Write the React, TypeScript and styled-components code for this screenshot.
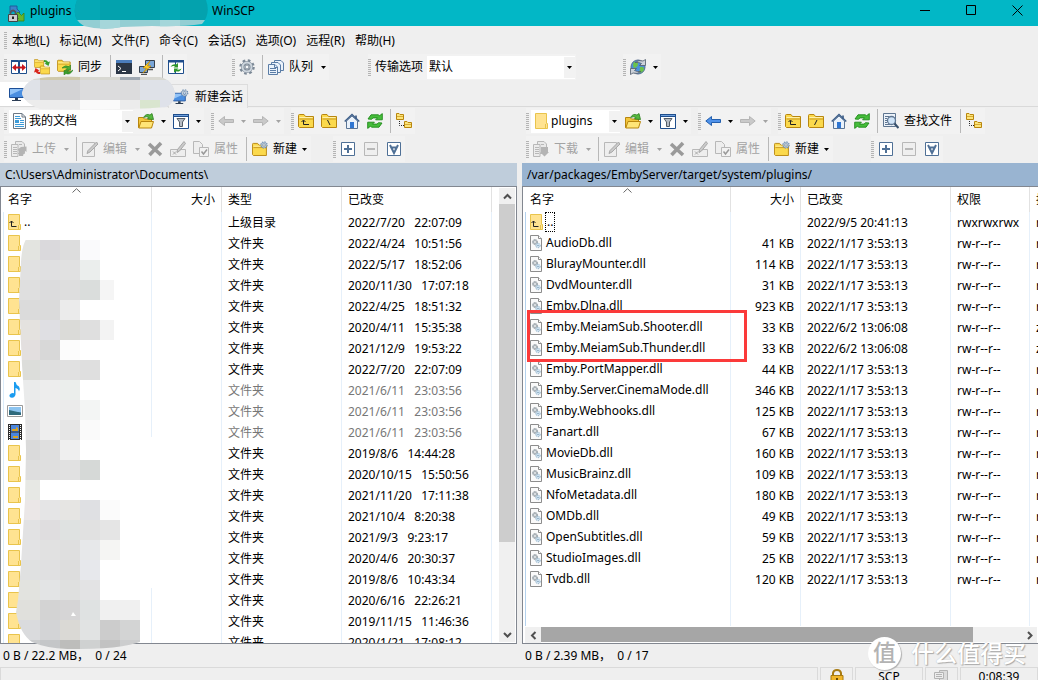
import React from "react";
import styled, { createGlobalStyle } from "styled-components";

const GlobalStyle = createGlobalStyle`
  * { box-sizing: border-box; }
  body {
    margin: 0;
    overflow: hidden;
    background: #efefef;
    color: #000;
    font: 12px/20px "Noto Sans", "Noto Sans CJK SC", sans-serif;
  }
  button, select { font: inherit; color: inherit; }
`;

/* ---------- window frame ---------- */

const Window = styled.div`
  position: relative;
  display: flex;
  flex-direction: column;
  height: 100vh;
  overflow: hidden;
`;

const TitleBar = styled.header`
  display: flex;
  align-items: center;
  height: 26px;
  padding-left: 8px;
  background: #02b7c6;
  flex: none;
`;

const Title = styled.h1`
  display: flex;
  flex: 1;
  margin: 0;
  padding: 0 0 4px 5px;
  font-size: 12px;
  font-weight: 400;
  line-height: 22px;
`;

const TitleName = styled.span`
  width: 182px;
`;

const CaptionButton = styled.button`
  display: flex;
  justify-content: center;
  width: 46px;
  height: 26px;
  padding: 5px 0 0 4px;
  border: 0;
  background: none;
  flex: none;
`;

const MenuBar = styled.nav`
  display: flex;
  align-items: center;
  gap: 5px;
  height: 28px;
  padding-left: 4px;
  flex: none;
`;

const MenuList = styled.div`
  display: flex;
  gap: 10px;
  padding-top: 1px;
`;

const MenuItem = styled.button`
  padding: 0;
  border: 0;
  background: none;
  white-space: nowrap;
`;

/* ---------- toolbars ---------- */

const ToolRow = styled.div<{ $main?: boolean }>`
  display: flex;
  align-items: center;
  height: 28px;
  padding-left: 4px;
  padding-bottom: ${(p) => (p.$main ? 2 : 0)}px;
  overflow: hidden;
  flex: none;
`;

const Strip = styled.div<{ $before?: number }>`
  display: flex;
  align-items: center;
  height: 26px;
  margin-left: ${(p) => p.$before ?? 0}px;
  background: #f2f2f2;
  flex: none;
`;

const Grip = styled.span`
  width: 3px;
  height: 17px;
  background: repeating-linear-gradient(#b4b4b4 0 1px, #efefef 1px 2px);
  flex: none;
`;

const Rule = styled.span`
  width: 1px;
  height: 24px;
  margin: 0 1px 0 4px;
  background: #b8b8b8;
  flex: none;
`;

const ToolButton = styled.button`
  display: flex;
  align-items: center;
  gap: 5px;
  height: 24px;
  padding: 0 3px 0 4px;
  border: 0;
  background: none;
  white-space: nowrap;
  flex: none;
  &:disabled { color: #a3a3a3; }
`;

const TextToolButton = styled(ToolButton)`
  padding-right: 4px;
`;

const DropButton = styled.button`
  display: flex;
  align-items: center;
  justify-content: center;
  width: 12px;
  height: 24px;
  padding: 0;
  border: 0;
  background: none;
  color: #000;
  flex: none;
  &:disabled { color: #a3a3a3; }
`;

const Combo = styled.div<{ $width: number }>`
  position: relative;
  display: flex;
  align-items: center;
  width: ${(p) => p.$width}px;
  height: 23px;
  margin: 0 1px 0 2px;
  border: 1px solid #fff;
  border-right: 0;
  background: #fff;
  flex: none;
`;

const ComboIcon = styled.span`
  display: flex;
  width: 18px;
  padding-left: 3px;
  flex: none;
`;

const ComboSelect = styled.select`
  flex: 1;
  min-width: 0;
  height: 21px;
  padding: 0 0 0 1px;
  border: 0;
  background: none;
  appearance: none;
`;

const ComboArrow = styled.span`
  display: flex;
  align-items: center;
  justify-content: center;
  width: 11px;
  height: 21px;
  background: #f2f2f2;
  flex: none;
`;

const FieldLabel = styled.label`
  padding: 0 2px 0 4px;
`;

/* ---------- session tabs ---------- */

const Tabs = styled.div`
  display: flex;
  height: 25px;
  border-bottom: 1px solid #d9d9d9;
  flex: none;
`;

const Tab = styled.button<{ $active?: boolean }>`
  display: flex;
  align-items: center;
  gap: 6px;
  height: 24px;
  margin-top: ${(p) => (p.$active ? 0 : 2)}px;
  min-width: ${(p) => (p.$active ? 168 : 0)}px;
  padding: 0 4px 0 ${(p) => (p.$active ? 8 : 4)}px;
  border: 1px solid ${(p) => (p.$active ? "#fff" : "#dcdcdc")};
  border-bottom: 0;
  background: ${(p) => (p.$active ? "#fff" : "#f0f0f0")};
`;

/* ---------- panes ---------- */

const Panes = styled.main`
  display: grid;
  grid-template-columns: minmax(0, 517fr) minmax(0, 516fr);
  gap: 5px;
  flex: 1;
  min-height: 0;
`;

const Pane = styled.section`
  display: flex;
  flex-direction: column;
  min-width: 0;
  min-height: 0;
`;

const PathBar = styled.div<{ $focused?: boolean }>`
  height: 23px;
  padding-left: 5px;
  background: ${(p) => (p.$focused ? "#99b4d1" : "#bfcddb")};
  line-height: 23px;
  white-space: nowrap;
  flex: none;
`;

const ListBox = styled.div<{ $column?: boolean }>`
  display: flex;
  flex-direction: ${(p) => (p.$column ? "column" : "row")};
  flex: 1;
  min-height: 0;
  border: 1px solid #828790;
  border-right-width: ${(p) => (p.$column ? 0 : 1)}px;
  background: #fff;
`;

const ListView = styled.div`
  flex: 1;
  min-width: 0;
  min-height: 0;
  overflow: hidden;
`;

const FileTable = styled.table<{ $edge: string }>`
  width: 100%;
  height: 100%;
  table-layout: fixed;
  border-spacing: 0;
  & th, & td {
    height: 21px;
    padding: 0 6px;
    overflow: hidden;
    border-right: 1px solid #e6f0fa;
    line-height: 20px;
    font-weight: 400;
    text-align: left;
    white-space: pre;
  }
  & th {
    position: relative;
    height: 25px;
    border-right-color: #e2e2e2;
  }
  & th:first-child, & td:first-child { padding: 0 0 0 7px; }
  & td:first-child {
    background: linear-gradient(${(p) => p.$edge}, ${(p) => p.$edge}) 2px 0 / 1px 100% no-repeat;
    vertical-align: top;
  }
  & th:last-child, & td:last-child { border-right: 0; padding-right: 0; }
  & tr > :nth-child(2) { text-align: right; }
`;

const Filler = styled.tr`
  && td { height: auto; padding: 0; }
`;

const Row = styled.tr<{ $dim?: boolean }>`
  color: ${(p) => (p.$dim ? "#777" : "#000")};
`;

const NameCell = styled.div`
  display: flex;
  align-items: center;
  gap: 3px;
  height: 20px;
`;

const RowIcon = styled.span`
  display: flex;
  justify-content: center;
  width: 13px;
  flex: none;
  & svg { flex: none; }
`;

const Focused = styled.span`
  min-width: 10px;
  height: 20px;
  margin-left: -1px;
  padding-left: 1px;
  border: 1px dotted #000;
  line-height: 18px;
`;

const SortMark = styled.svg`
  position: absolute;
  top: 1px;
  left: calc(50% - 4px);
`;

const Summary = styled.div`
  height: 23px;
  padding-left: 3px;
  line-height: 24px;
  white-space: pre;
  flex: none;
`;

const VScroll = styled.div`
  display: flex;
  flex-direction: column;
  width: 16px;
  margin: 1px 1px 1px 0;
  background: #f0f0f0;
  flex: none;
`;

const HScroll = styled.div`
  display: flex;
  height: 15px;
  margin: 1px 1px 1px 2px;
  background: #f0f0f0;
  flex: none;
`;

const ScrollButton = styled.button`
  display: flex;
  align-items: center;
  justify-content: center;
  width: 16px;
  height: 16px;
  padding: 0;
  border: 0;
  background: #f0f0f0;
  flex: none;
`;

const Track = styled.div<{ $row?: boolean }>`
  display: flex;
  flex-direction: ${(p) => (p.$row ? "row" : "column")};
  flex: 1;
`;

const Thumb = styled.div<{ $share: number; $dark?: boolean }>`
  flex: 0 0 ${(p) => p.$share}%;
  background: ${(p) => (p.$dark ? "#a6a6a6" : "#cdcdcd")};
`;

/* ---------- bottom bar ---------- */

const StatusBar = styled.footer`
  display: flex;
  gap: 2px;
  height: 13px;
  overflow: hidden;
  flex: none;
`;

const StatusCell = styled.div<{ $width?: number }>`
  display: flex;
  align-items: flex-start;
  justify-content: center;
  flex: ${(p) => (p.$width ? `0 0 ${p.$width}px` : "1")};
  height: 24px;
  border: 1px solid #dadada;
  line-height: 18px;
`;

/* ---------- overlays ---------- */

const Overlay = styled.svg<{ $x: number; $y: number }>`
  position: absolute;
  left: ${(p) => p.$x}px;
  top: ${(p) => p.$y}px;
  pointer-events: none;
`;

const RedBox = styled.div`
  position: absolute;
  left: 5px;
  top: 203px;
  width: 220px;
  height: 52px;
  border: 3px solid #fb3a3a;
  pointer-events: none;
`;

const RightPane = styled(Pane)`
  position: relative;
`;

const Watermark = styled.div`
  position: absolute;
  right: 12px;
  bottom: 10px;
  display: flex;
  align-items: center;
  gap: 10px;
  color: #fff;
  font-size: 23px;
  font-weight: 500;
  line-height: 34px;
  text-shadow: 1px 1px 1px #a9a9a9, 0 0 1px #b5b5b5;
`;

const WatermarkBadge = styled.span`
  width: 33px;
  height: 33px;
  border-radius: 50%;
  background: #fff;
  color: #b3b3b3;
  line-height: 31px;
  text-align: center;
  text-shadow: none;
  box-shadow: 1px 1px 1px #b0b0b0;
`;

/* ---------- icons ---------- */

const Svg = ({ w = 16, h = 16, children }: { w?: number; h?: number; children: React.ReactNode }) => (
  <svg width={w} height={h} viewBox={`0 0 ${w} ${h}`} fill="none" aria-hidden="true">
    {children}
  </svg>
);

const Caret = () => (
  <Svg w={5} h={3}><path d="M0 0H5L2.5 3Z" fill="currentColor" /></Svg>
);

const FolderShape = ({ x = 0, y = 0, s = 1 }: { x?: number; y?: number; s?: number }) => (
  <g transform={`translate(${x} ${y}) scale(${s})`}>
    <path d="M.5 13.5V2.5Q.5 1.5 1.5 1.5H6L7.5 3.5H15.5V14.5H1.5Z" fill="#fbd94c" stroke="#b8860f" />
    <path d="M1.5 6H15" stroke="#c99a22" />
    <path d="M1.5 4.5H14.5" stroke="#fff0a8" />
  </g>
);

const AppIcon = () => (
  <Svg w={17} h={17}>
    <path d="M2 1H9V4L12 7L9 10L6 6L2 8Z" fill="#3b82c9" stroke="#1d5c9c" />
    <path d="M16 8V16H8L10.500 13.500L7 10L10 7L13.500 10.500Z" fill="#67b52e" stroke="#3c8412" strokeWidth=".8" />
    <path d="M2.500 10V7Q5 3.500 7.500 7V10" stroke="#555" strokeWidth="1.600" />
    <path d="M.5 9.500H9.500V16.500H.5Z" fill="#c9ccd0" stroke="#444" />
    <path d="M5 11.500V14" stroke="#222" strokeWidth="2" />
  </Svg>
);

const ColumnsIcon = () => (
  <Svg>
    <path d="M.5 1.500H7.500V14.500H.5ZM8.500 1.500H15.500V14.500H8.500Z" fill="#fff" stroke="#1f4e8c" />
    <path d="M0 1H7.500V3H0ZM8.500 1H16V3H8.500Z" fill="#1f4e8c" />
    <path d="M3 8.500H13" stroke="#c8161d" strokeWidth="2" />
    <path d="M1 8.500L5 5V12ZM15 8.500L11 5V12Z" fill="#c8161d" />
  </Svg>
);

const SyncBrowseIcon = () => (
  <Svg>
    <FolderShape x={0} y={-0.500} s={0.620} />
    <FolderShape x={6} y={6} s={0.620} />
    <path d="M10 1Q13.500 1 14 3L16 2.500L14.500 7L10.500 4.500L12 4Q12 3 10 3Z" fill="#3a9e2d" />
    <path d="M6 15Q2.500 15 2 13L0 13.500L1.500 9L5.500 11.500L4 12Q4 13 6 13Z" fill="#d9261c" />
  </Svg>
);

const SyncIcon = () => (
  <Svg>
    <FolderShape x={0} y={0} s={0.850} />
    <path d="M5 9Q8 5.500 12 7.500L13.500 6V11H8.500L10.500 9.200Q8 8.500 5 9Z" fill="#4caf36" stroke="#2b7d1c" strokeWidth=".6" />
    <path d="M16 11Q13 16.500 9 14.500L7 16V11.500H12L10.500 13Q13 13.500 16 11Z" fill="#3a9e2d" stroke="#2b7d1c" strokeWidth=".6" />
  </Svg>
);

const ConsoleIcon = () => (
  <Svg>
    <path d="M0 1H16V15H0Z" fill="#2b3646" />
    <path d="M0 1H16V4H0Z" fill="#4b7dbc" />
    <path d="M2 7L5 9.500L2 12M6 12.500H10" stroke="#fff" />
  </Svg>
);

const PuttyIcon = () => (
  <Svg>
    <path d="M6.500 1.500H15.500V8.500H6.500ZM.5 7.500H8.500V13.500H.5Z" fill="#7aa6d8" stroke="#35404e" />
    <path d="M9 10.500H14M2 15.500H8" stroke="#555" strokeWidth="1.500" />
    <path d="M11 2L4 9H7.500L4 14L12 7H8.500Z" fill="#ffcf2b" stroke="#c08800" strokeWidth=".7" />
  </Svg>
);

const SyncPanelsIcon = () => (
  <Svg>
    <path d="M.5 1.500H15.500V14.500H.5Z" fill="#fff" stroke="#1f4e8c" />
    <path d="M0 1H16V3.500H0Z" fill="#1f4e8c" />
    <path d="M7.500 3V6M7.500 12V15" stroke="#1f4e8c" />
    <path d="M2.500 8Q4 4.500 8 5.500L10 4V8.500H5.500L7 7.200Q5 6.500 2.500 8ZM13.500 9.500Q12 13.500 8 12.300L6 13.800V9.500H10.500L9 10.800Q11 11 13.500 9.500Z" fill="#2f962a" />
  </Svg>
);

const GearShape = ({ x = 8, y = 8, s = 1, c = "#7b8896" }: { x?: number; y?: number; s?: number; c?: string }) => (
  <g transform={`translate(${x} ${y}) scale(${s})`}>
    <circle r="6.500" stroke={c} strokeWidth="2.500" strokeDasharray="2.600 2.505" />
    <circle r="4.300" stroke={c} strokeWidth="3.400" />
    <circle r="4.500" stroke="#cdd5dd" strokeWidth="2" />
    <circle r="2" fill="#f5f7f9" stroke={c} />
  </g>
);

const QueueIcon = () => (
  <Svg>
    <path d="M6.500 1.500H13L15.500 4V11.500H6.500Z" fill="#eaf2fb" stroke="#5b7da6" />
    <path d="M3.500 3.500H10L12.500 6V13.500H3.500Z" fill="#eaf2fb" stroke="#5b7da6" />
    <path d="M.5 5.500H7L9.500 8V15.500H.5Z" fill="#eaf2fb" stroke="#5b7da6" />
    <path d="M2 9.500H8M2 11.500H8M2 13.500H8M6.500 5.500V8.500H9.500" stroke="#5b7da6" />
  </Svg>
);

const GlobeIcon = () => (
  <Svg>
    <circle cx="8" cy="8" r="7" fill="#4a8fdd" stroke="#566d8c" />
    <path d="M4 3Q8 2 8 5T4 9Q2 6 4 3ZM10 8Q14 7 14 10T9 14Q10 10 10 8Z" fill="#6cc24a" />
    <path d="M5 3.500Q9 .5 13 2L15.500 .5V6.500H9.500L11.500 4.500Q9 3 5 3.500ZM11 12.500Q7 15.500 3 14L.5 15.500V9.500H6.500L4.500 11.500Q7 13 11 12.500Z" fill="#ccd2da" stroke="#4f5b6a" strokeWidth=".8" />
  </Svg>
);

const MonitorShape = () => (
  <>
    <path d="M.5 1.500H14.500V10.500H.5Z" fill="#4a8ee0" stroke="#1d4f97" />
    <path d="M1 2H14L1 8Z" fill="#92c3f7" />
    <path d="M6 11H9V13H6ZM3 13H12V14H3Z" fill="#2c3e55" />
  </>
);

const MonitorIcon = () => <Svg><MonitorShape /></Svg>;

const NewSessionIcon = () => (
  <Svg>
    <g transform="translate(0 3) scale(.85)"><MonitorShape /></g>
    <GearShape x={11.500} y={4} s={0.500} c="#6f8fb3" />
  </Svg>
);

const DocumentIcon = () => (
  <Svg w={13}>
    <path d="M.5 .5H9L12.500 4V15.500H.5Z" fill="#fdfdfd" stroke="#6d7884" />
    <path d="M9 .5V4H12.500" stroke="#6d7884" />
    <path d="M2 3.500H7M2 5.500H8M2 11.500H11M2 13.500H11" stroke="#3d9bd8" />
    <path d="M2 7H6V10H2Z" fill="#3d9bd8" />
    <path d="M7 7.500H11M7 9.500H11" stroke="#3d9bd8" />
  </Svg>
);

const WinFolder = ({ up }: { up?: boolean }) => (
  <Svg w={13}>
    <path d="M.5 .5H11.500V10.500H12.500V15.500H.5Z" fill="#ffe391" stroke="#e9c44c" />
    <path d="M10.500 11V15.500" stroke="#e9c44c" />
    {up && <path d="M3.500 7V12.500H8.500M1.500 9L3.500 7L5.500 9" stroke="#222" />}
  </Svg>
);

const OpenFolderIcon = () => (
  <Svg>
    <path d="M.5 14.500V4.500H5L6.500 6H13.500V14.500Z" fill="#f3c63c" stroke="#b8860f" />
    <path d="M.8 15L3 8.500H15.500L13.500 15Z" fill="#ffe577" stroke="#b8860f" />
    <path d="M5.500 4.500Q8 0 12 2L14 .5L15.500 6.500L9.500 6L11 4.500Q8.500 3 5.500 4.500Z" fill="#55b83e" stroke="#2b7d1c" strokeWidth=".8" />
  </Svg>
);

const FilterIcon = () => (
  <Svg>
    <path d="M.5 1.500H15.500V15.500H.5Z" fill="#fff" stroke="#1f4e8c" />
    <path d="M0 1H16V4H0Z" fill="#1f4e8c" />
    <path d="M1 2.500H15" stroke="#6fa0dd" />
    <path d="M4 5.500H12L9.500 9V13.500H6.500V9Z" fill="#b6bcc4" stroke="#535c66" />
  </Svg>
);

const ArrowIcon = ({ flip, blue }: { flip?: boolean; blue?: boolean }) => (
  <Svg>
    <g transform={flip ? "translate(16 0) scale(-1 1)" : undefined}>
      <path
        d="M.8 8L6.500 3.500V6.500H15.500V9.500H6.500V12.500Z"
        fill={blue ? "#4f92ea" : "#c9c9c9"}
        stroke={blue ? "#2560ae" : "#b5b5b5"}
      />
    </g>
  </Svg>
);

const DirIcon = ({ kind }: { kind: "up" | "back" | "slash" }) => (
  <Svg>
    <FolderShape />
    {kind === "up" && <path d="M5.500 7.500V11.500H11M3.500 9L5.500 7L7.500 9" stroke="#222" />}
    {kind === "back" && <path d="M6.500 7L9 12" stroke="#222" />}
    {kind === "slash" && <path d="M9 7L6.500 12" stroke="#222" />}
  </Svg>
);

const HomeIcon = () => (
  <Svg>
    <path d="M2.500 8V15.500H13.500V8L8 3Z" fill="#eaf2fb" stroke="#5b7596" />
    <path d="M12 2.500V6" stroke="#5b7596" strokeWidth="2" />
    <path d="M.7 8.500L8 1.500L15.300 8.500" stroke="#3e5f8a" strokeWidth="1.500" />
    <path d="M6 9H10V15H6Z" fill="#2f76d2" />
  </Svg>
);

const RefreshIcon = () => (
  <Svg>
    <g fill="#46bd3b" stroke="#1f8a1a" strokeWidth=".9">
      <path d="M1 6L4 1.800H11.500L12.500 2.800L15.300 .6V6.800H8.600L10.500 4.900H6L4.500 6.300Z" />
      <path d="M15 10L12 14.200H4.500L3.500 13.200L.7 15.400V9.200H7.400L5.500 11.100H10L11.500 9.700Z" />
    </g>
  </Svg>
);

const TreeIcon = () => (
  <Svg>
    <path d="M.5 .5H3L4 1.500H7.500V6.500H.5ZM8.500 8.500H11L12 9.500H15.500V14.500H8.500Z" fill="#fde57a" stroke="#b8860f" />
    <path d="M1 3.500H7M9 11.500H15" stroke="#d8ad35" />
    <path d="M3.500 8V12.500H8" stroke="#222" strokeDasharray="1 1" />
  </Svg>
);

const FindIcon = () => (
  <Svg>
    <path d="M.5 .5H12.500V13.500H.5Z" fill="#edf3fa" stroke="#5f7691" />
    <path d="M2 3.500H6M2 5.500H4M2 7.500H4M2 9.500H4M2 11.500H7" stroke="#5f7691" />
    <circle cx="8.500" cy="7.500" r="4" fill="#cfe4f8" stroke="#5f7691" strokeWidth="1.300" />
    <path d="M11.500 10.500L15.500 15" stroke="#38506c" strokeWidth="2.200" />
  </Svg>
);

const TransferIcon = ({ down }: { down?: boolean }) => (
  <Svg>
    <path d="M4.500 .5H11L13.500 3V12.500H4.500Z" fill="#e9e9e9" stroke="#b8b8b8" />
    <path d="M.5 3.500H7V15.500H.5ZM2 6.500H6M2 8.500H6M2 10.500H6M2 12.500H6M8 3.500H11" fill="#ececec" stroke="#b8b8b8" />
    {down
      ? <path d="M8 6H15V11H16L11.500 15.500L7 11H8Z" fill="#b4b4b4" />
      : <path d="M8 15V10L6.500 8.500L10 6L15.500 5.500V11L13.500 9.500L12 15Z" fill="#b4b4b4" />}
  </Svg>
);

const EditIcon = () => (
  <Svg>
    <path d="M.5 1.500H12.500V15.500H.5Z" fill="#eee" stroke="#b8b8b8" />
    <path d="M14.500 1L16 3L8 11L5 12.500L6 9.500Z" fill="#cacaca" stroke="#a8a8a8" />
  </Svg>
);

const DeleteIcon = () => (
  <Svg>
    <path d="M2 3L14 14M14 2L2.500 14" stroke="#9a9a9a" strokeWidth="3.600" />
  </Svg>
);

const RenameIcon = () => (
  <Svg>
    <path d="M.5 8.500H15.500V15.500H.5Z" fill="#eee" stroke="#b8b8b8" />
    <path d="M3 10.500L6 13.500M6 10.500L3 13.500" stroke="#a8a8a8" />
    <path d="M14 .5L15.500 2.500L9.500 10L7 11.500L7.500 8.500Z" fill="#cacaca" stroke="#a8a8a8" />
  </Svg>
);

const PropsIcon = () => (
  <Svg>
    <path d="M.5 .5H6.500L9.500 3.500V12.500H.5Z" fill="#eee" stroke="#b8b8b8" />
    <path d="M6.500 6.500H15.500V15.500H6.500Z" fill="#f2f2f2" stroke="#b8b8b8" />
    <path d="M8.500 10.500L10.500 13L14 8.500" stroke="#999" strokeWidth="1.500" />
  </Svg>
);

const NewIcon = () => (
  <Svg>
    <FolderShape y={1} s={0.930} />
    <GearShape x={12} y={4} s={0.480} c="#6f8fb3" />
  </Svg>
);

const SelectIcon = ({ kind }: { kind: "plus" | "minus" | "mask" }) => {
  const c = kind === "minus" ? "#b8b8b8" : "#4f7096";
  return (
    <Svg>
      <path d="M1.500 1.500H14.500V14.500H1.500Z" fill={kind === "minus" ? "#efefef" : "#fff"} stroke={c} />
      {kind === "plus" && <path d="M4 8H12M8 4V12" stroke={c} strokeWidth="2" />}
      {kind === "minus" && <path d="M4 8H12" stroke={c} strokeWidth="2" />}
      {kind === "mask" && <path d="M4 4L8 12L12 4M5 6.500H11" stroke={c} strokeWidth="2" />}
    </Svg>
  );
};

const MusicIcon = () => (
  <Svg w={13}>
    <path d="M6 0H7.500Q8 3 11 4.500Q12.500 6.500 11 9.500Q10.500 6.500 7.500 6V12.500Q7 15.500 4 15.800Q1 15.500 1.500 13Q3 10.500 6 11.200Z" fill="#1a9cf0" />
  </Svg>
);

const PictureIcon = () => (
  <Svg>
    <path d="M.5 2.500H15.500V13.500H.5Z" fill="#fff" stroke="#9a9a9a" />
    <path d="M2 4H14V12H2Z" fill="#8cc4f0" />
    <path d="M2 7Q7 8 14 9.500V12H2Z" fill="#2f6a7c" />
  </Svg>
);

const FilmIcon = () => (
  <Svg w={14}>
    <path d="M0 0H14V16H0Z" fill="#2f2f2f" />
    <path d="M3 1H11V7.500H3ZM3 8.500H11V15H3Z" fill="#4b86dd" />
    <path d="M4 5H8V3L10 4V7H4ZM5 12H10V14H5Z" fill="#d9a321" />
    <path d="M1.500 1V16M12.500 1V16" stroke="#fff" strokeDasharray="1 1" />
  </Svg>
);

const DllIcon = () => (
  <Svg w={13}>
    <path d="M.5 .5H8.500L11.500 3.500V15.500H.5Z" fill="#fafafa" stroke="#8c8c8c" />
    <path d="M8.500 .5V3.500H11.500" fill="#fff" stroke="#8c8c8c" />
    <circle cx="5" cy="7" r="2.500" fill="#dfe3e6" stroke="#8d969d" strokeDasharray="1.200 .8" />
    <circle cx="5" cy="7" r="1.600" stroke="#9aa3aa" strokeWidth=".8" />
    <circle cx="8" cy="10.500" r="2.200" fill="#d4e6f3" stroke="#86a9c2" strokeDasharray="1.200 .8" />
    <circle cx="8" cy="10.500" r=".7" fill="#6f94b0" />
  </Svg>
);

const LockIcon = () => (
  <Svg w={14} h={18}>
    <path d="M3 8V5Q3.500 2 7 2T11 5V8" stroke="#a87b12" strokeWidth="2" />
    <path d="M1 7.500H13V17H1Z" fill="#f2b629" stroke="#a87b12" />
    <path d="M7 10V13" stroke="#6b4c05" strokeWidth="2" />
  </Svg>
);

const ServerIcon = () => (
  <Svg h={17}>
    <path d="M5.500 2.500H13.500V13.500H5.500Z" fill="#dcdcdc" stroke="#b4b4b4" />
    <path d="M.5 4.500H9.500V10.500H.5Z" fill="#ededed" stroke="#b4b4b4" />
    <path d="M2 6.500H8M2 8.500H8" stroke="#b4b4b4" />
  </Svg>
);

const Chevron = ({ d }: { d: string }) => (
  <Svg w={9} h={9}><path d={d} stroke="#505050" strokeWidth="2" /></Svg>
);

/* ---------- data ---------- */

const menus = ["本地(L)", "标记(M)", "文件(F)", "命令(C)", "会话(S)", "选项(O)", "远程(R)", "帮助(H)"];

type LocalKind = "up" | "folder" | "music" | "picture" | "film";

const localRows: [LocalKind, string][] = [
  ["up", "2022/7/20   22:07:09"],
  ["folder", "2022/4/24   10:51:56"],
  ["folder", "2022/5/17   18:52:06"],
  ["folder", "2020/11/30   17:07:18"],
  ["folder", "2022/4/25   18:51:32"],
  ["folder", "2020/4/11   15:35:38"],
  ["folder", "2021/12/9   19:53:22"],
  ["folder", "2022/7/20   22:07:09"],
  ["music", "2021/6/11   23:03:56"],
  ["picture", "2021/6/11   23:03:56"],
  ["film", "2021/6/11   23:03:56"],
  ["folder", "2019/8/6   14:44:28"],
  ["folder", "2020/10/15   15:50:56"],
  ["folder", "2021/11/20   17:11:38"],
  ["folder", "2021/10/4   8:20:38"],
  ["folder", "2021/9/3   9:23:17"],
  ["folder", "2020/4/6   20:30:37"],
  ["folder", "2019/8/6   10:43:34"],
  ["folder", "2020/6/16   22:26:21"],
  ["folder", "2019/11/15   11:46:36"],
  ["folder", "2020/1/21   17:08:12"],
];

const localIcons: Record<LocalKind, React.ReactNode> = {
  up: <WinFolder up />,
  folder: <WinFolder />,
  music: <MusicIcon />,
  picture: <PictureIcon />,
  film: <FilmIcon />,
};

const usual = "2022/1/17 3:53:13";
const patched = "2022/6/2 13:06:08";

const remoteRows: [string, string, string][] = [
  ["AudioDb.dll", "41 KB", usual],
  ["BlurayMounter.dll", "114 KB", usual],
  ["DvdMounter.dll", "31 KB", usual],
  ["Emby.Dlna.dll", "923 KB", usual],
  ["Emby.MeiamSub.Shooter.dll", "33 KB", patched],
  ["Emby.MeiamSub.Thunder.dll", "33 KB", patched],
  ["Emby.PortMapper.dll", "44 KB", usual],
  ["Emby.Server.CinemaMode.dll", "346 KB", usual],
  ["Emby.Webhooks.dll", "125 KB", usual],
  ["Fanart.dll", "67 KB", usual],
  ["MovieDb.dll", "160 KB", usual],
  ["MusicBrainz.dll", "109 KB", usual],
  ["NfoMetadata.dll", "180 KB", usual],
  ["OMDb.dll", "49 KB", usual],
  ["OpenSubtitles.dll", "59 KB", usual],
  ["StudioImages.dll", "25 KB", usual],
  ["Tvdb.dll", "120 KB", usual],
];

/* Shades of the pixelated patch over the local names, one line per 20px band. */
const mosaic = [
  "e3e4e0 dad9dc dddddd fafafc",
  "e1e1e1 e0e0e1 e1e1e1 ebeeed",
  "dfdfdf dcdcdd dedede dadddc f5f5f5",
  "dbdbdb dbdbdb ebebeb",
  "e4e2df dfdfe3 dbdbd8 dfdfdf f3f3f3",
  "e3dfdf d8d8d8 fcfcfc",
  "dcddda dfdfdf e1e1e1 dfdfdf",
  "eaebeb ededed ebeeec",
  "e8e8e8 ededed ebebeb f3f5f4",
  "e3e3e4 eeeeee e6e6e6 fafafa",
  "dadada dfdfdf efefef",
  "dedede dfdfdf e1e1e1 d6d9d7",
  "e7e8e4 ffffff ffffff ffffff",
  "ebe7e7 e5e5e6 e6e5e3 dfe0e3 fbfbfb",
  "e2e2e3 dfdddf dfe2e1 e1e1e1 e5e5e5",
  "e3e3e4 e1e1e1 dfdfdf e7e8ea f5f5f3",
  "e0e1e1 e0e0e1 dddddd e7e8ec",
  "e2e3df e3e4e5 dfe0df e3e3e4",
  "e0e0dc d3d3d3 d6d5d6 dfe2e2 f0f0f0 f0f0f0",
  "dadbdd d3d4d6 dad9d5 e1e3e3 cccccc d3d4d4",
  "c9cbcd c4c6c8 bdbdbb cfd1d1 c2c2c2 cccdce",
].map((line) => line.split(" "));

const NameMosaic = () => (
  <Overlay $x={16} $y={236} width={138} height={413} viewBox="16 236 138 413" aria-hidden="true">
    <clipPath id="namePatch">
      <path d="M27 238Q22 244 21 262L19 300L22 365L25 410L26 450L25 500L21 565L18 600L16 612Q20 634 32 642Q50 650 80 649Q130 649 148 638L154 600V236Z" />
    </clipPath>
    <path d="M151 437H153V588H151Z" fill="#fff" />
    <g clipPath="url(#namePatch)">
      {mosaic.map((line, r) =>
        line.map((shade, c) => (
          <rect
            key={`${r}-${c}`}
            x={c === 0 ? 10 : 20 + c * 20}
            y={240 + r * 20}
            width={c === 0 ? 30 : c === 4 && r < 6 ? 14 : 20}
            height="20"
            fill={`#${shade}`}
          />
        )),
      )}
    </g>
    <path d="M71 616L73 612L76 616Z" fill="#fff" />
  </Overlay>
);

const TitleMosaic = () => (
  <Overlay $x={72} $y={0} width={138} height={30} aria-hidden="true">
    <clipPath id="titlePatch"><path d="M5 0H134Q139 14 130 24Q110 27 80 26L50 27Q30 31 12 26Q-2 18 5 0Z" /></clipPath>
    <g clipPath="url(#titlePatch)">
      <path d="M0 0H138V20H0Z" fill="#03a2ae" />
      <path d="M0 0H28V20H0ZM88 0H108V20H88Z" fill="#05a8b5" />
      <path d="M0 20H138V30H0Z" fill="#93ced3" />
      <path d="M28 20H48V30H28ZM88 20H108V30H88Z" fill="#a5d6da" />
    </g>
  </Overlay>
);

const TabMosaic = () => (
  <Overlay $x={20} $y={76} width={158} height={34} aria-hidden="true">
    <clipPath id="tabPatch"><path d="M14 3Q30 0 60 1L140 1Q153 4 155 18Q154 28 146 31Q100 35 20 33Q3 26 2 17Q4 8 14 3Z" /></clipPath>
    <g clipPath="url(#tabPatch)">
      <path d="M0 4H158V24H0Z" fill="#dcdcdd" />
      <path d="M20 4H60V24H20Z" fill="#d3d3d5" />
      <path d="M0 4H20V24H0ZM120 4H158V24H120Z" fill="#dfe2e8" />
      <path d="M0 0H158V4H0Z" fill="#d8d8d2" />
      <path d="M20 0H60V4H20Z" fill="#cfc9ac" />
      <path d="M100 0H120V4H100Z" fill="#9fa8b2" />
      <path d="M0 24H158V34H0Z" fill="#ececec" />
      <path d="M60 24H100V34H60Z" fill="#fafafa" />
      <path d="M120 24H140V34H120Z" fill="#d9e5cf" />
      <path d="M140 24H158V34H140Z" fill="#dfe2ea" />
    </g>
  </Overlay>
);

/* ---------- composed parts ---------- */

type PaneSide = "local" | "remote";

const Tool = ({ label, icon, disabled }: { label: string; icon: React.ReactNode; disabled?: boolean }) => (
  <ToolButton type="button" aria-label={label} disabled={disabled}>{icon}</ToolButton>
);

const Drop = ({ label, disabled }: { label: string; disabled?: boolean }) => (
  <DropButton type="button" aria-label={label} disabled={disabled}><Caret /></DropButton>
);

const DriveCombo = ({ side }: { side: PaneSide }) => {
  const local = side === "local";
  return (
    <Combo $width={local ? 124 : 89}>
      <ComboIcon>{local ? <DocumentIcon /> : <WinFolder />}</ComboIcon>
      <ComboSelect aria-label={local ? "本地目录" : "远程目录"}>
        <option>{local ? "我的文档" : "plugins"}</option>
      </ComboSelect>
      <ComboArrow><Caret /></ComboArrow>
    </Combo>
  );
};

const NavRow = ({ side }: { side: PaneSide }) => {
  const local = side === "local";
  return (
    <ToolRow>
      <Strip>
        <Grip />
        <DriveCombo side={side} />
        <Tool label="打开目录" icon={<OpenFolderIcon />} />
        <Drop label="打开目录选项" />
        <Tool label="过滤" icon={<FilterIcon />} />
        <Drop label="过滤选项" />
      </Strip>
      <Strip $before={7}>
        <Grip />
        <Tool label="后退" icon={<ArrowIcon blue={!local} />} disabled={local} />
        <Drop label="后退历史" disabled={local} />
        <Tool label="前进" icon={<ArrowIcon flip />} disabled />
        <Drop label="前进历史" disabled />
      </Strip>
      <Strip $before={7}>
        <Grip />
        <Tool label="上级目录" icon={<DirIcon kind="up" />} />
        <Tool label="根目录" icon={<DirIcon kind={local ? "back" : "slash"} />} />
        <Tool label="主目录" icon={<HomeIcon />} />
        <Tool label="刷新" icon={<RefreshIcon />} />
        <Rule />
        {!local && (
          <>
            <TextToolButton type="button"><FindIcon />查找文件</TextToolButton>
            <Rule />
          </>
        )}
        <Tool label="目录树" icon={<TreeIcon />} />
      </Strip>
    </ToolRow>
  );
};

const ActionRow = ({ side }: { side: PaneSide }) => {
  const local = side === "local";
  return (
    <ToolRow>
      <Strip>
        <Grip />
        <TextToolButton type="button" disabled>
          <TransferIcon down={!local} />{local ? "上传" : "下载"}
        </TextToolButton>
        <Drop label="传输选项" disabled />
        <Rule />
        <TextToolButton type="button" disabled><EditIcon />编辑</TextToolButton>
        <Drop label="编辑选项" disabled />
        <Tool label="删除" icon={<DeleteIcon />} disabled />
        <Tool label="重命名" icon={<RenameIcon />} disabled />
        <TextToolButton type="button" disabled><PropsIcon />属性</TextToolButton>
        <Rule />
        <TextToolButton type="button"><NewIcon />新建<Caret /></TextToolButton>
      </Strip>
      <Strip $before={local ? 22 : 38}>
        <Grip />
        <Tool label="选择" icon={<SelectIcon kind="plus" />} />
        <Tool label="取消选择" icon={<SelectIcon kind="minus" />} disabled />
        <Tool label="选择掩码" icon={<SelectIcon kind="mask" />} />
      </Strip>
    </ToolRow>
  );
};

const SortCaret = () => (
  <SortMark width="9" height="5" viewBox="0 0 9 5" fill="none" aria-hidden="true">
    <path d="M.5 4.500L4.500 .7L8.500 4.500" stroke="#666" />
  </SortMark>
);

const LocalTable = () => (
  <FileTable $edge="#dcecf9">
    <colgroup>
      <col width="151" /><col width="70" /><col width="120" /><col width="150" /><col />
    </colgroup>
    <thead>
      <tr><th>名字<SortCaret /></th><th>大小</th><th>类型</th><th>已改变</th><th /></tr>
    </thead>
    <tbody>
      {localRows.map(([kind, changed], i) => (
        <Row key={i} $dim={kind === "music" || kind === "picture" || kind === "film"}>
          <td><NameCell><RowIcon>{localIcons[kind]}</RowIcon>{kind === "up" && ".."}</NameCell></td>
          <td />
          <td>{kind === "up" ? "上级目录" : "文件夹"}</td>
          <td>{changed}</td>
          <td />
        </Row>
      ))}
    </tbody>
  </FileTable>
);

const RemoteTable = () => (
  <FileTable $edge="#b4d2ee">
    <colgroup>
      <col width="208" /><col width="70" /><col width="150" /><col width="79" /><col />
    </colgroup>
    <thead>
      <tr><th>名字<SortCaret /></th><th>大小</th><th>已改变</th><th>权限</th><th>拥有者</th></tr>
    </thead>
    <tbody>
      <Row>
        <td><NameCell><RowIcon><WinFolder up /></RowIcon><Focused>..</Focused></NameCell></td>
        <td /><td>2022/9/5 20:41:13</td><td>rwxrwxrwx</td><td>root</td>
      </Row>
      {remoteRows.map(([name, size, changed]) => (
        <Row key={name}>
          <td><NameCell><RowIcon><DllIcon /></RowIcon>{name}</NameCell></td>
          <td>{size}</td>
          <td>{changed}</td>
          <td>rw-r--r--</td>
          <td>{changed === patched ? "z" : "root"}</td>
        </Row>
      ))}
      <Filler><td /><td /><td /><td /><td /></Filler>
    </tbody>
  </FileTable>
);

export default function App() {
  return (
    <Window>
      <GlobalStyle />
      <TitleBar>
        <AppIcon />
        <Title><TitleName>plugins</TitleName>WinSCP</Title>
        <CaptionButton type="button" aria-label="最小化">
          <Svg w={11} h={11}><path d="M0 5.500H10" stroke="#000" /></Svg>
        </CaptionButton>
        <CaptionButton type="button" aria-label="最大化">
          <Svg w={11} h={11}><path d="M.5 .5H9.500V9.500H.5Z" stroke="#000" /></Svg>
        </CaptionButton>
        <CaptionButton type="button" aria-label="关闭">
          <Svg w={11} h={11}><path d="M.5 .5L10.500 10.500M10.500 .5L.5 10.500" stroke="#000" /></Svg>
        </CaptionButton>
      </TitleBar>

      <MenuBar>
        <Grip />
        <MenuList>
          {menus.map((m) => <MenuItem type="button" key={m}>{m}</MenuItem>)}
        </MenuList>
      </MenuBar>

      <ToolRow $main>
        <Strip>
          <Grip />
          <Tool label="比较目录" icon={<ColumnsIcon />} />
          <Tool label="同步浏览" icon={<SyncBrowseIcon />} />
          <TextToolButton type="button"><SyncIcon />同步</TextToolButton>
          <Rule />
          <Tool label="控制台" icon={<ConsoleIcon />} />
          <Tool label="打开 PuTTY" icon={<PuttyIcon />} />
          <Rule />
          <Tool label="同步面板" icon={<SyncPanelsIcon />} />
        </Strip>
        <Strip $before={45}>
          <Grip />
          <Tool label="选项" icon={<Svg><GearShape /></Svg>} />
          <Rule />
          <TextToolButton type="button"><QueueIcon />队列</TextToolButton>
          <Drop label="队列选项" />
        </Strip>
        <Strip $before={39}>
          <Grip />
          <FieldLabel htmlFor="preset">传输选项</FieldLabel>
          <Combo $width={148}>
            <ComboSelect id="preset"><option>默认</option></ComboSelect>
            <ComboArrow><Caret /></ComboArrow>
          </Combo>
        </Strip>
        <Strip $before={47}>
          <Grip />
          <Tool label="刷新会话" icon={<GlobeIcon />} />
          <Drop label="会话选项" />
        </Strip>
      </ToolRow>

      <Tabs>
        <Tab type="button" aria-label="当前会话" $active><MonitorIcon /></Tab>
        <Tab type="button"><NewSessionIcon />新建会话</Tab>
      </Tabs>

      <Panes>
        <Pane>
          <NavRow side="local" />
          <ActionRow side="local" />
          <PathBar>C:\Users\Administrator\Documents\</PathBar>
          <ListBox>
            <ListView><LocalTable /></ListView>
            <VScroll>
              <ScrollButton type="button" aria-label="向上"><Chevron d="M1 6.500L4.500 3L8 6.500" /></ScrollButton>
              <Track><Thumb $share={80} /></Track>
              <ScrollButton type="button" aria-label="向下"><Chevron d="M1 3L4.500 6.500L8 3" /></ScrollButton>
            </VScroll>
          </ListBox>
          <Summary>0 B / 22.2 MB，  0 / 24</Summary>
        </Pane>

        <RightPane>
          <NavRow side="remote" />
          <ActionRow side="remote" />
          <PathBar $focused>/var/packages/EmbyServer/target/system/plugins/</PathBar>
          <ListBox $column>
            <ListView><RemoteTable /></ListView>
            <HScroll>
              <ScrollButton type="button" aria-label="向左"><Chevron d="M6.500 1L3 4.500L6.500 8" /></ScrollButton>
              <Track $row><Thumb $share={90} $dark /></Track>
              <ScrollButton type="button" aria-label="向右"><Chevron d="M3 1L6.500 4.500L3 8" /></ScrollButton>
            </HScroll>
          </ListBox>
          <Summary>0 B / 2.39 MB，  0 / 17</Summary>
          <RedBox />
        </RightPane>
      </Panes>

      <StatusBar>
        <StatusCell />
        <StatusCell $width={33}><LockIcon /></StatusCell>
        <StatusCell $width={68}>SCP</StatusCell>
        <StatusCell $width={33}><ServerIcon /></StatusCell>
        <StatusCell $width={78}>0:08:39</StatusCell>
      </StatusBar>

      <TitleMosaic />
      <TabMosaic />
      <NameMosaic />
      <Watermark><WatermarkBadge>值</WatermarkBadge>什么值得买</Watermark>
    </Window>
  );
}
